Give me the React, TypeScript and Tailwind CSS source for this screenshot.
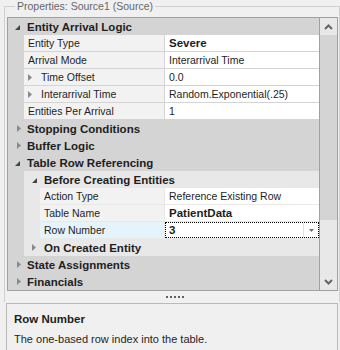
import React from "react"

type Row =
  | { t: "cat"; label: string; open?: boolean }
  | { t: "sub"; label: string; open?: boolean }
  | {
      t: "prop"
      d: 1 | 2
      label: string
      value: string
      bold?: boolean
      exp?: boolean
      selected?: boolean
    }

const rows: Row[] = [
  { t: "cat", label: "Entity Arrival Logic", open: true },
  { t: "prop", d: 1, label: "Entity Type", value: "Severe", bold: true },
  { t: "prop", d: 1, label: "Arrival Mode", value: "Interarrival Time" },
  { t: "prop", d: 1, label: "Time Offset", value: "0.0", exp: true },
  { t: "prop", d: 1, label: "Interarrival Time", value: "Random.Exponential(.25)", exp: true },
  { t: "prop", d: 1, label: "Entities Per Arrival", value: "1" },
  { t: "cat", label: "Stopping Conditions" },
  { t: "cat", label: "Buffer Logic" },
  { t: "cat", label: "Table Row Referencing", open: true },
  { t: "sub", label: "Before Creating Entities", open: true },
  { t: "prop", d: 2, label: "Action Type", value: "Reference Existing Row" },
  { t: "prop", d: 2, label: "Table Name", value: "PatientData", bold: true },
  { t: "prop", d: 2, label: "Row Number", value: "3", bold: true, selected: true },
  { t: "sub", label: "On Created Entity" },
  { t: "cat", label: "State Assignments" },
  { t: "cat", label: "Financials" },
]

// tree glyphs, drawn like the Windows property grid
function Expanded() {
  return (
    <svg width="5" height="5" viewBox="0 0 5 5" className="mt-[2px] shrink-0">
      <polygon points="5,0 5,5 0,5" fill="#454545" />
    </svg>
  )
}

function Collapsed() {
  return (
    <svg width="4" height="7" viewBox="0 0 4 7" className="shrink-0">
      <polygon points="0,0 4,3.5 0,7" fill="#8a8a8a" />
    </svg>
  )
}

function CategoryRow({ label, open }: { label: string; open?: boolean }) {
  return (
    <div className="flex h-[17px] items-center bg-[#d4d4d4]">
      <div className={`flex w-[16px] items-center ${open ? "pl-[7px]" : "pl-[9px]"}`}>
        {open ? <Expanded /> : <Collapsed />}
      </div>
      <span className="pl-[3px] text-[11.5px] font-bold leading-[16px] text-[#1e1e1e]">{label}</span>
    </div>
  )
}

function SubRow({ label, open }: { label: string; open?: boolean }) {
  return (
    <div className="flex h-[17px] bg-[#d4d4d4]">
      <div className="w-[16px]" />
      <div className="flex flex-1 items-center bg-[#e8e8e8]">
        <div className="flex w-[16px] items-center pl-[8px]">{open ? <Expanded /> : <Collapsed />}</div>
        <span className="pl-[4px] text-[11.5px] font-bold leading-[16px] text-[#1e1e1e]">{label}</span>
      </div>
    </div>
  )
}

function PropRow({ row }: { row: Extract<Row, { t: "prop" }> }) {
  const label = (
    <div
      className={`flex h-[16px] items-center ${row.d === 1 ? "w-[140px]" : "w-[124px]"} ${
        row.selected ? "bg-[#e5f3fb]" : "bg-[#f2f2f2]"
      } pl-[4px]`}
    >
      {row.exp && (
        <span className="mr-[9px] flex">
          <Collapsed />
        </span>
      )}
      <span className="text-[10.5px] leading-[16px] text-[#1e1e1e] whitespace-nowrap">{row.label}</span>
    </div>
  )

  const value = row.selected ? (
    <div className="ml-px flex h-[16px] flex-1 items-center border border-dotted border-black bg-white">
      <span className="flex-1 pl-[3px] text-[11.5px] font-bold leading-[14px] text-[#1e1e1e]">{row.value}</span>
      <div className="flex h-full w-[15px] items-center justify-center border-l border-[#e0e0e0]">
        <svg width="5" height="3" viewBox="0 0 5 3">
          <polygon points="0,0 5,0 2.5,3" fill="#707070" />
        </svg>
      </div>
    </div>
  ) : (
    <div className="ml-px flex h-[16px] flex-1 items-center bg-white pl-[4px]">
      <span
        className={`whitespace-nowrap leading-[16px] text-[#1e1e1e] ${
          row.bold ? "text-[11.5px] font-bold" : "text-[10.5px]"
        }`}
      >
        {row.value}
      </span>
    </div>
  )

  if (row.d === 1) {
    return (
      <div className="flex h-[17px] bg-[#d4d4d4]">
        <div className="w-[16px]" />
        {label}
        {value}
      </div>
    )
  }
  return (
    <div className="flex h-[17px] bg-[#d4d4d4]">
      <div className="w-[16px]" />
      <div className="flex flex-1 bg-[#e8e8e8]">
        <div className="w-[16px]" />
        {label}
        {value}
      </div>
    </div>
  )
}

function ScrollBar() {
  return (
    <div className="flex w-[18px] flex-col border-l border-[#a0a0a0] bg-[#e8e8e8]">
      <div className="flex h-[17px] items-center justify-center">
        <svg width="9" height="6" viewBox="0 0 9 6">
          <polyline points="1,5 4.5,1.5 8,5" fill="none" stroke="#666" strokeWidth="2" />
        </svg>
      </div>
      <div className="h-[185px] bg-[#d4d4d4]" />
      <div className="flex-1" />
      <div className="flex h-[17px] items-center justify-center">
        <svg width="9" height="6" viewBox="0 0 9 6">
          <polyline points="1,1 4.5,4.5 8,1" fill="none" stroke="#666" strokeWidth="2" />
        </svg>
      </div>
    </div>
  )
}

export default function App() {
  return (
    <div className="h-[350px] w-[340px] overflow-hidden bg-[#f0f0f0] font-['Liberation_Sans',Arial,sans-serif] text-[#1e1e1e]">
      <fieldset className="ml-[4px] w-[336px] border border-b-0 border-[#d0d0d0] pl-[2px] pr-px">
        <legend className="ml-[8px] px-[2px] text-[10.5px] leading-[13px] text-[#666]">
          Properties: Source1 (Source)
        </legend>
        <div className="mt-[4px] flex h-[274px] w-[331px] border border-[#a0a0a0]">
          <div className="flex flex-1 flex-col bg-[#d4d4d4]">
            {rows.map((r, i) =>
              r.t === "cat" ? (
                <CategoryRow key={i} label={r.label} open={r.open} />
              ) : r.t === "sub" ? (
                <SubRow key={i} label={r.label} open={r.open} />
              ) : (
                <PropRow key={i} row={r} />
              )
            )}
          </div>
          <ScrollBar />
        </div>
        <div className="flex h-[11px] items-center justify-center gap-[2px] pl-[4px]">
          {[0, 1, 2, 3, 4].map((d) => (
            <div key={d} className="h-[2px] w-[2px] bg-[#606060]" />
          ))}
        </div>
      </fieldset>
      <div className="ml-[6px] mt-px h-[60px] w-[332px] border border-[#b9b9b9] pl-[7px] pt-[8px]">
        <div className="text-[11.5px] font-bold leading-[14px]">Row Number</div>
        <div className="mt-[6px] text-[11px] leading-[14px]">The one-based row index into the table.</div>
      </div>
    </div>
  )
}
